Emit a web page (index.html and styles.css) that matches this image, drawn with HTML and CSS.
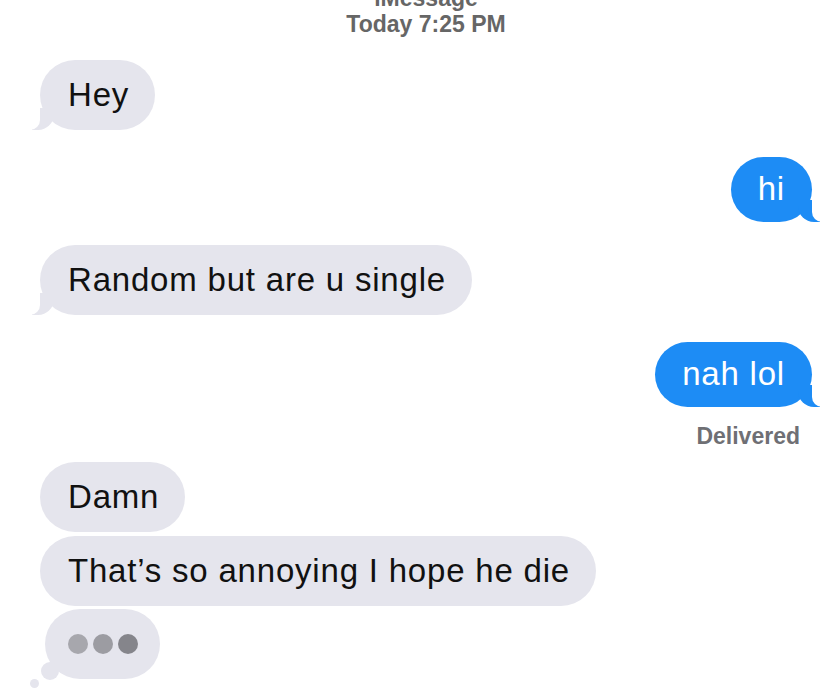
FILE: index.html
```html
<!DOCTYPE html>
<html lang="en">
<head>
  <meta charset="UTF-8" />
  <title>iMessage</title>
  <link rel="stylesheet" href="styles.css">
</head>
<body>
  <div class="chat">
    <div class="chat-header">
      <div class="service">iMessage</div>
      <div class="time">Today 7:25 PM</div>
    </div>

    <div class="row row-hey">
      <div class="bubble from tail">Hey</div>
    </div>
    <div class="row row-hi">
      <div class="bubble to tail">hi</div>
    </div>
    <div class="row row-random">
      <div class="bubble from tail">Random but are u single</div>
    </div>
    <div class="row row-nah">
      <div class="bubble to tail">nah lol</div>
    </div>
    <div class="status">Delivered</div>

    <div class="row row-damn">
      <div class="bubble from">Damn</div>
    </div>
    <div class="row row-annoying">
      <div class="bubble from">That’s so annoying I hope he die</div>
    </div>
    <div class="row row-typing">
      <div class="bubble from typing">
        <span class="dot"></span>
        <span class="dot"></span>
        <span class="dot"></span>
      </div>
    </div>
  </div>
</body>
</html>
```

FILE: styles.css
```css
:root {
  --grey: #e5e5ed;
  --blue: #1d8cf5;
  --text: #111;
}

* {
  margin: 0;
  padding: 0;
  box-sizing: border-box;
}

body {
  background: #fff;
  font-family: 'Liberation Sans', Arial, sans-serif;
  color: var(--text);
  width: 828px;
  height: 695px;
  overflow: hidden;
}

.chat {
  display: flex;
  flex-direction: column;
}

.chat-header {
  margin-top: -15px;
  text-align: center;
  color: #666;
  font-weight: bold;
  font-size: 23px;
  line-height: 26px;
  padding-left: 24px;
}

.row {
  display: flex;
}

.row-hi,
.row-nah {
  justify-content: flex-end;
  padding-right: 16px;
}

.row-hey { margin-top: 23px; padding-left: 40px; }
.row-hi { margin-top: 27px; }
.row-random { margin-top: 23px; padding-left: 40px; }
.row-nah { margin-top: 27px; }
.row-damn { margin-top: 12px; padding-left: 40px; }
.row-annoying { margin-top: 4px; padding-left: 40px; }
.row-typing { margin-top: 3px; padding-left: 45px; }

.bubble {
  position: relative;
  font-size: 33px;
  letter-spacing: 0.8px;
  line-height: 38px;
  padding: 16px 26px 16px 28px;
  border-radius: 35px;
}

.from {
  background: var(--grey);
  color: var(--text);
}

.to {
  background: var(--blue);
  color: #fff;
  padding: 13px 27px 14px 27px;
  border-radius: 33px;
}

.from.tail::before {
  content: "";
  position: absolute;
  bottom: 0;
  left: -8px;
  width: 22px;
  height: 22px;
  background: var(--grey);
  border-bottom-right-radius: 16px;
}

.from.tail::after {
  content: "";
  position: absolute;
  bottom: 0;
  left: -12px;
  width: 12px;
  height: 24px;
  background: #fff;
  border-bottom-right-radius: 10px;
}

.to.tail::before {
  content: "";
  position: absolute;
  bottom: 0;
  right: -8px;
  width: 22px;
  height: 22px;
  background: var(--blue);
  border-bottom-left-radius: 16px;
}

.to.tail::after {
  content: "";
  position: absolute;
  bottom: 0;
  right: -12px;
  width: 12px;
  height: 24px;
  background: #fff;
  border-bottom-left-radius: 10px;
}

.status {
  align-self: flex-end;
  margin-top: 15px;
  margin-right: 28px;
  color: #6f6f74;
  font-weight: bold;
  font-size: 23px;
  line-height: 28px;
}

.typing {
  width: 115px;
  height: 70px;
  padding: 0;
  display: flex;
  align-items: center;
  justify-content: center;
  gap: 5px;
}

.typing .dot {
  width: 20px;
  height: 20px;
  border-radius: 50%;
  background: #a7a7ad;
}

.typing .dot:nth-child(2) { background: #9c9ca2; }
.typing .dot:nth-child(3) { background: #85858b; }

.typing::before {
  content: "";
  position: absolute;
  left: -4px;
  bottom: -1px;
  width: 18px;
  height: 18px;
  border-radius: 50%;
  background: var(--grey);
}

.typing::after {
  content: "";
  position: absolute;
  left: -15px;
  bottom: -9px;
  width: 9px;
  height: 9px;
  border-radius: 50%;
  background: var(--grey);
}
```
